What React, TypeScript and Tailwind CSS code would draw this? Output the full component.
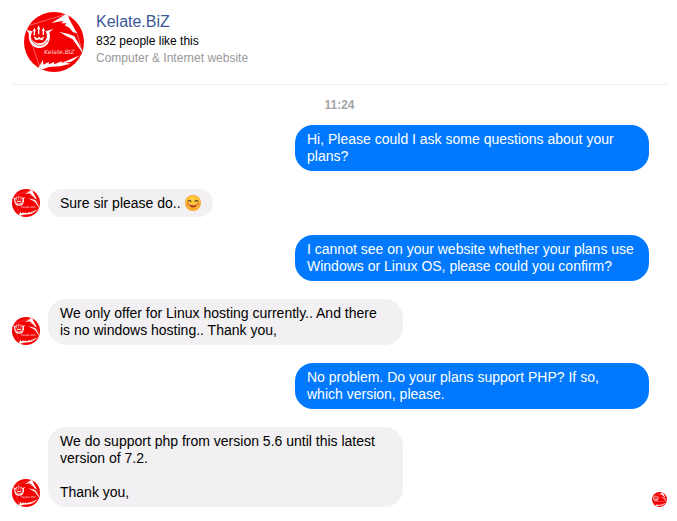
import { useId } from 'react';
import type { ReactNode } from 'react';

type Message = {
  id: number;
  from: 'page' | 'visitor';
  body: ReactNode;
};

const messages: Message[] = [
  { id: 1, from: 'visitor', body: 'Hi, Please could I ask some questions about your plans?' },
  {
    id: 2,
    from: 'page',
    body: (
      <span className="flex items-center gap-1 leading-4">
        Sure sir please do.. <SmileEmoji />
      </span>
    ),
  },
  {
    id: 3,
    from: 'visitor',
    body: 'I cannot see on your website whether your plans use Windows or Linux OS, please could you confirm?',
  },
  {
    id: 4,
    from: 'page',
    body: 'We only offer for Linux hosting currently.. And there is\u00a0no windows hosting.. Thank you,',
  },
  {
    id: 5,
    from: 'visitor',
    body: 'No problem. Do your plans support PHP? If so, which version, please.',
  },
  {
    id: 6,
    from: 'page',
    body: 'We do support php from version 5.6 until this latest version of 7.2.\n\nThank you,',
  },
];

function SmileEmoji() {
  return (
    <svg viewBox="0 0 32 32" className="size-4 shrink-0" role="img" aria-label="Smiling face">
      <circle cx="16" cy="16" r="16" fill="#f7a928" />
      <ellipse cx="16" cy="14" rx="14" ry="12" fill="#ffc93f" />
      <ellipse cx="6" cy="18" rx="4" ry="3" fill="#f58a45" />
      <ellipse cx="26" cy="18" rx="4" ry="3" fill="#f58a45" />
      <path
        d="M6 13 Q9 8 12 13 M20 13 Q23 8 26 13"
        fill="none"
        stroke="#553816"
        strokeWidth="2.4"
        strokeLinecap="round"
      />
      <path d="M8 19 Q16 23 24 19 Q22 25 16 25 Q10 25 8 19Z" fill="#a52c22" />
    </svg>
  );
}

function Logo({ className }: { className: string }) {
  const clip = useId();

  return (
    <svg viewBox="0 0 180 180" className={className} aria-hidden="true">
      <clipPath id={clip}>
        <circle cx="90" cy="90" r="90" />
      </clipPath>
      <g clipPath={`url(#${clip})`}>
        <rect width="180" height="180" fill="#f40000" />
        {/* flag outline */}
        <path
          d="M7 43 L128 6 M7 43 L48 168 M157 58 L178 128"
          fill="none"
          stroke="#fff"
          strokeWidth="2"
          opacity="0.6"
        />
        {/* wing */}
        <path
          d="M82 33 L130 4 L136 22 L159 64 L147 61 L136 47 L122 40 L128 34 L112 34 L119 26 Z"
          fill="#fff"
        />
        <path d="M105 59 L134 66 L151 73 L165 96 L178 127 L160 101 L146 82 L128 73 Z" fill="#fff" />
        {/* torn lower edge */}
        <path
          d="M43 168 L57 143 L58 158 L75 149 L74 157 L91 150 L90 157 L114 148 L113 153 L168 130 L142 149 L124 152 L140 155 L108 163 L74 165 L50 174 Z"
          fill="#fff"
        />
        {/* horned face */}
        <path
          d="M6 54 L26 58 Q16 71 25 84 Q34 95 48 94 Q62 92 67 80 Q72 69 64 58 L88 51 L76 61 Q82 80 71 96 Q60 109 44 108 Q26 107 18 91 Q12 78 15 63 Z"
          fill="#fff"
        />
        <path d="M20 76 Q27 99 47 101 Q63 100 72 84" fill="none" stroke="#f40000" strokeWidth="2" />
        <path
          d="M31 47 L36 58 L33 58 L33 70 L29 70 L29 58 L26 58 Z M44 40 L49 52 L46 52 L46 67 L42 67 L42 52 L39 52 Z M58 46 L63 57 L60 57 L60 69 L56 69 L56 57 L53 57 Z"
          fill="#fff"
        />
        <path d="M28 73 L40 79 L45 74 L50 79 L62 73 L55 85 L45 82 L35 85 Z" fill="#fff" />
        <text
          x="60"
          y="125"
          fill="#fff"
          fillOpacity="0.85"
          fontFamily="'DejaVu Sans', sans-serif"
          fontSize="18"
          fontStyle="italic"
        >
          Kelate.BIZ
        </text>
      </g>
    </svg>
  );
}

function ChatMessage({ message }: { message: Message }) {
  if (message.from === 'visitor') {
    return (
      <li className="flex justify-end pr-[18px]">
        <p className="max-w-[354px] rounded-[18px] bg-[#0079ff] px-3 py-1.5 text-white">{message.body}</p>
      </li>
    );
  }

  return (
    <li className="flex items-end gap-2">
      <Logo className="size-7 shrink-0" />
      <div className="max-w-[355px] whitespace-pre-line rounded-[18px] bg-[#f2f0f2] px-3 py-1.5 text-black">
        {message.body}
      </div>
    </li>
  );
}

export default function App() {
  return (
    <main className="min-h-screen bg-white pl-3 pr-[10px] pt-3 font-['Liberation_Sans',Arial,sans-serif]">
      <header className="flex gap-3 border-b border-[#eeeeee] pb-3 pl-3">
        <Logo className="size-[60px] shrink-0" />
        <div>
          <h1 className="text-base leading-5 text-[#3b5998]">Kelate.BiZ</h1>
          <p className="text-xs leading-[18px] text-black">832 people like this</p>
          <p className="text-xs leading-4 text-[#999999]">Computer &amp; Internet website</p>
        </div>
      </header>

      <time className="block py-3 text-center text-xs font-bold leading-4 text-[#a3a3a3]">11:24</time>

      <div className="relative">
        <ul className="flex flex-col gap-[18px] text-sm leading-[17px]">
          {messages.map((message) => (
            <ChatMessage key={message.id} message={message} />
          ))}
        </ul>
        {/* Seen marker */}
        <Logo className="absolute right-0 bottom-0 size-[15px]" />
      </div>
    </main>
  );
}
